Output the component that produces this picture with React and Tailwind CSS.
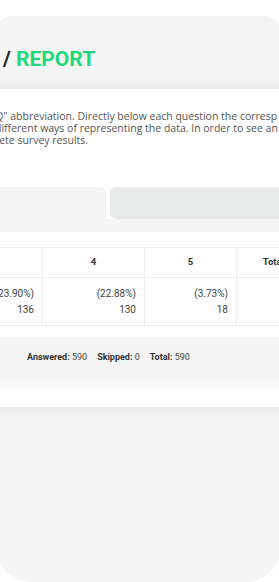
import React from "react";

const headers = ["", "4", "5", "Total"];
const cells = [
  { pct: "(23.90%)", count: "136" },
  { pct: "(22.88%)", count: "130" },
  { pct: "(3.73%)", count: "18" },
  null,
];

export default function App() {
  return (
    <div className="w-[279px] h-[582px] overflow-hidden bg-white font-['Roboto',sans-serif]">
      {/* phone-like grey panel */}
      <div className="mt-[16px] ml-[-4px] w-[285px] h-[566px] bg-[#f5f5f5] rounded-t-[16px] rounded-b-[36px] flex flex-col">
        {/* title */}
        <div className="h-[73px] pt-[31px] pl-[7px] text-[21px] leading-[24px] font-bold whitespace-nowrap">
          <span className="text-[#222]">/</span>{" "}
          <span className="text-[#20d97d]">REPORT</span>
        </div>

        {/* white report card */}
        <div className="-mx-[40px] h-[318px] bg-white shadow-[0_0_14px_rgba(0,0,0,0.07)] relative z-10 flex flex-col">
          <div className="pt-[21px] font-['Open_Sans',sans-serif] text-[10.5px] leading-[12px] text-[#555] whitespace-nowrap">
            <div className="ml-[35px]">
              "Q" abbreviation. Directly below each question the corresp
            </div>
            <div className="ml-[39px]">
              different ways of representing the data. In order to see an
            </div>
            <div className="ml-[13px]">complete survey results.</div>
          </div>

          {/* tabs */}
          <div className="mt-[41px] flex gap-[4px] h-[32px]">
            <div className="w-[150px] shrink-0 bg-[#f5f5f5] rounded-tr-[6px]" />
            <div className="w-[260px] shrink-0 bg-[#e9eaea] rounded-[6px]" />
          </div>
          <div className="h-[13px] bg-[#f5f5f5]" />

          {/* table */}
          <div className="mt-[15px] grid grid-cols-[87px_102px_92px_74px] border-y border-[#efefef] text-[10px] text-[#444]">
            {headers.map((h, i) => (
              <div
                key={"h" + i}
                className="h-[30px] flex items-center justify-center border-r border-b border-[#efefef] font-bold text-[9.5px] text-[#333]"
              >
                {h}
              </div>
            ))}
            {cells.map((c, i) => (
              <div
                key={"c" + i}
                className="h-[47px] flex flex-col justify-center items-end pr-[8px] border-r border-[#efefef] leading-[16px]"
              >
                {c && (
                  <>
                    <span>{c.pct}</span>
                    <span>{c.count}</span>
                  </>
                )}
              </div>
            ))}
          </div>

          {/* summary bar */}
          <div className="mt-[11px] h-[42px] bg-[#f5f5f5] flex items-center pl-[71px] gap-[10px] text-[9px] text-[#444] whitespace-nowrap shadow-[0_6px_10px_-2px_rgba(0,0,0,0.05)]">
            <span>
              <b className="text-[#333]">Answered:</b> 590
            </span>
            <span>
              <b className="text-[#333]">Skipped:</b> 0
            </span>
            <span>
              <b className="text-[#333]">Total:</b> 590
            </span>
          </div>
        </div>
      </div>
    </div>
  );
}
